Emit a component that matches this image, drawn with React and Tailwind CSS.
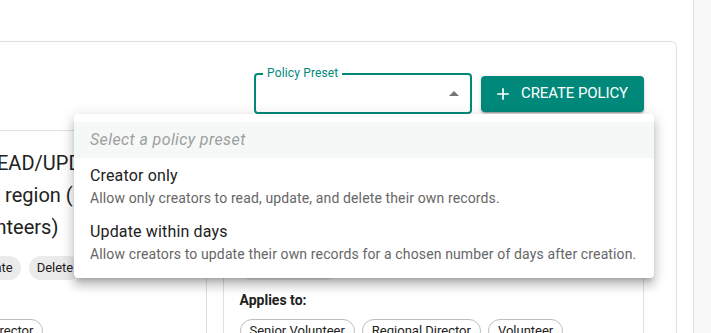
import React from "react";

const presets = [
  {
    title: "Creator only",
    desc: "Allow only creators to read, update, and delete their own records.",
  },
  {
    title: "Update within days",
    desc: "Allow creators to update their own records for a chosen number of days after creation.",
  },
];

function Chip({ label, outlined }) {
  return (
    <span
      className={
        outlined
          ? "inline-flex h-6 items-center whitespace-nowrap rounded-full border border-[#bdbdbd] px-[9px] text-[13px] text-[#212121]"
          : "inline-flex h-6 items-center whitespace-nowrap rounded-full bg-[#ebebeb] px-2 text-[13px] text-[#212121]"
      }
    >
      {label}
    </span>
  );
}

function PolicyCard({ lines, actions, roles }) {
  return (
    <div className="rounded-md border border-[#e0e0e0] bg-white p-4">
      <div className="-ml-3 text-xl leading-8 text-[#212121]">
        {lines.map((l) => (
          <span key={l} className="block whitespace-nowrap">
            {l}
          </span>
        ))}
      </div>
      <div className="mt-[13px] flex gap-2">
        {actions.map((a) => (
          <Chip key={a} label={a} />
        ))}
      </div>
      <p className="mt-[10px] text-sm leading-5 font-bold text-[#212121]">Applies to:</p>
      <div className="mt-[9px] flex gap-[7px]">
        {roles.map((r) => (
          <Chip key={r} label={r} outlined />
        ))}
      </div>
    </div>
  );
}

export default function App() {
  return (
    <div className="flex h-[333px] w-[711px] overflow-hidden bg-white font-['Roboto',sans-serif]">
      <div className="relative min-w-0 flex-1">
        <div className="pt-[41px] pr-4">
          <div className="-ml-[248px] rounded-md border border-[#e0e0e0] bg-white px-8 pt-[31px] pb-8">
            <div className="flex items-center justify-end gap-[9px]">
              {/* outlined select, open */}
              <div className="relative flex h-[41px] w-[218px] items-center justify-end rounded border-2 border-[#00897b] pr-[4px]">
                <span className="absolute -top-[10px] left-[7px] bg-white px-1 text-xs leading-4 tracking-[0.15px] text-[#00897b]">
                  Policy Preset
                </span>
                <svg viewBox="0 0 24 24" className="h-6 w-6 fill-[#757575]">
                  <path d="M7 14l5-5 5 5z" />
                </svg>
              </div>
              <button className="flex h-9 items-center rounded bg-[#00897b] pr-4 pl-3 text-[15px] font-normal tracking-[-0.1px] text-white uppercase shadow-[0px_3px_1px_-2px_rgba(0,0,0,0.2),0px_2px_2px_0px_rgba(0,0,0,0.14),0px_1px_5px_0px_rgba(0,0,0,0.12)]">
                <svg viewBox="0 0 24 24" className="mr-2 h-5 w-5 fill-white">
                  <path d="M19 13h-6v6h-2v-6H5v-2h6V5h2v6h6z" />
                </svg>
                Create Policy
              </button>
            </div>

            <div className="mt-4 grid grid-cols-2 gap-4">
              <PolicyCard
                lines={[
                  "Regional Director can READ/UPDATE",
                  "all records for their own region (Directors,",
                  "Senior Volunteers, Volunteers)",
                ]}
                actions={["Create", "Read regions", "Update", "Delete"]}
                roles={["Senior Volunteer", "Regional Director"]}
              />
              <PolicyCard
                lines={[
                  "Creators can UPDATE their own",
                  "records for 7 days after creation",
                  "(all roles)",
                ]}
                actions={["Update 7 days"]}
                roles={["Senior Volunteer", "Regional Director", "Volunteer"]}
              />
            </div>
          </div>
        </div>

        {/* open preset menu */}
        <div className="absolute top-[114px] left-[74px] w-[580px] rounded bg-white py-2 shadow-[0px_5px_5px_-3px_rgba(0,0,0,0.2),0px_8px_10px_1px_rgba(0,0,0,0.14),0px_3px_14px_2px_rgba(0,0,0,0.12)]">
          <div className="bg-[#f4f8f7] px-4 py-1.5 text-base leading-6 tracking-[0.4px] text-[#9e9e9e] italic">
            Select a policy preset
          </div>
          {presets.map((p) => (
            <div key={p.title} className="px-4 py-1.5">
              <div className="text-base leading-6 tracking-[0.15px] text-[#212121]">{p.title}</div>
              <div className="whitespace-nowrap text-sm leading-5 tracking-[0.13px] text-[#666666]">
                {p.desc}
              </div>
            </div>
          ))}
        </div>
      </div>
      <div className="w-[18px] border-l border-[#e0e0e0] bg-[#f8f8f8]" />
    </div>
  );
}
